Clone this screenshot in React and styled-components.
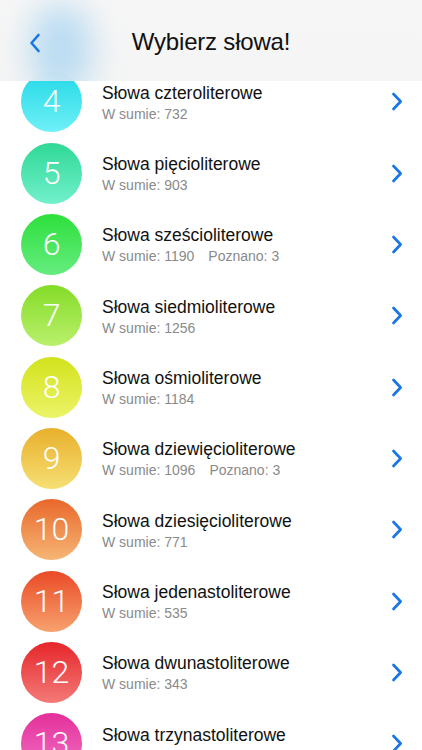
import React from "react";
import styled, { createGlobalStyle } from "styled-components";

const Global = createGlobalStyle`
  html, body { margin: 0; padding: 0; background: #fff; }
  body { font-family: "Liberation Sans", Arial, sans-serif; -webkit-font-smoothing: antialiased; }
  * { box-sizing: border-box; }
`;

const Screen = styled.div`
  position: relative;
  width: 422px;
  height: 750px;
  overflow: hidden;
  background: #fff;
`;

const Header = styled.header`
  position: absolute;
  top: 0;
  left: 0;
  right: 0;
  height: 81px;
  z-index: 2;
  display: flex;
  align-items: center;
  justify-content: center;
  padding-top: 2px;
  background: linear-gradient(180deg, rgba(246,246,246,0.97) 0%, rgba(244,244,244,0.96) 100%);
  overflow: hidden;
`;

const Blob = styled.div`
  position: absolute;
  left: 30px;
  top: 4px;
  width: 62px;
  height: 90px;
  border-radius: 45%;
  background: rgba(130, 195, 240, 0.5);
  filter: blur(16px);
`;

const BackButton = styled.button`
  position: absolute;
  left: 24px;
  top: 31px;
  width: 22px;
  height: 24px;
  padding: 0;
  border: 0;
  background: none;
  display: flex;
  align-items: center;
  justify-content: center;
`;

const Title = styled.h1`
  position: relative;
  margin: 0;
  font-family: "Liberation Sans", Arial, sans-serif;
  font-weight: 400;
  font-size: 24px;
  color: #111;
  letter-spacing: -0.2px;
`;

const List = styled.ul`
  list-style: none;
  margin: 0;
  padding: 66px 0 0 0;
`;

const Row = styled.li`
  height: 71.35px;
  display: flex;
  align-items: center;
  padding: 0 18px 0 21px;
`;

const Circle = styled.div`
  flex: none;
  width: 61px;
  height: 61px;
  border-radius: 50%;
  background: linear-gradient(180deg, ${p => p.$top} 0%, ${p => p.$bottom} 100%);
  display: flex;
  align-items: center;
  justify-content: center;
  color: #fff;
  font-family: "Roboto", "Liberation Sans", sans-serif;
  font-weight: 300;
  font-size: 32px;
  line-height: 1;
  padding-bottom: 1px;
`;

const Texts = styled.div`
  flex: 1;
  margin-left: 20px;
  display: flex;
  flex-direction: column;
  margin-top: 2px;
`;

const RowTitle = styled.div`
  font-size: 17.5px;
  color: #111;
  line-height: 21px;
`;

const Sub = styled.div`
  font-size: 14px;
  color: #8a8a8a;
  line-height: 18px;
  margin-top: 1px;
  display: flex;
  gap: 14px;
`;

const Chevron = styled.div`
  flex: none;
  width: 14px;
  display: flex;
  justify-content: center;
`;

const rows = [
  { n: 4, name: "Słowa czteroliterowe", total: 732, top: "#22d8e6", bottom: "#6ff0f6" },
  { n: 5, name: "Słowa pięcioliterowe", total: 903, top: "#2fd896", bottom: "#72f0cc" },
  { n: 6, name: "Słowa sześcioliterowe", total: 1190, known: 3, top: "#2ee03c", bottom: "#66ec80" },
  { n: 7, name: "Słowa siedmioliterowe", total: 1256, top: "#84dc28", bottom: "#baf06c" },
  { n: 8, name: "Słowa ośmioliterowe", total: 1184, top: "#d2e21c", bottom: "#ecf468" },
  { n: 9, name: "Słowa dziewięcioliterowe", total: 1096, known: 3, top: "#e8b02c", bottom: "#f6df74" },
  { n: 10, name: "Słowa dziesięcioliterowe", total: 771, top: "#e8682a", bottom: "#f6b676" },
  { n: 11, name: "Słowa jedenastoliterowe", total: 535, top: "#ea4a26", bottom: "#f7a26e" },
  { n: 12, name: "Słowa dwunastoliterowe", total: 343, top: "#e6262a", bottom: "#f47a78" },
  { n: 13, name: "Słowa trzynastoliterowe", total: 211, top: "#e4309a", bottom: "#f272c6" },
];

const RightIcon = () => (
  <svg width="12" height="19" viewBox="0 0 12 19" fill="none">
    <path d="M2.5 2 L9.6 9.5 L2.5 17" stroke="#1a76e6" strokeWidth="2.7" strokeLinecap="round" strokeLinejoin="round" />
  </svg>
);

const LeftIcon = () => (
  <svg width="12" height="20" viewBox="0 0 12 20" fill="none">
    <path d="M9.5 2 L2.5 10 L9.5 18" stroke="#1a76e6" strokeWidth="2.6" strokeLinecap="round" strokeLinejoin="round" />
  </svg>
);

export default function App() {
  return (
    <Screen>
      <Global />
      <Header>
        <Blob />
        <BackButton aria-label="Wstecz"><LeftIcon /></BackButton>
        <Title>Wybierz słowa!</Title>
      </Header>
      <List>
        {rows.map(r => (
          <Row key={r.n}>
            <Circle $top={r.top} $bottom={r.bottom}>{r.n}</Circle>
            <Texts>
              <RowTitle>{r.name}</RowTitle>
              <Sub>
                <span>W sumie: {r.total}</span>
                {r.known != null && <span>Poznano: {r.known}</span>}
              </Sub>
            </Texts>
            <Chevron><RightIcon /></Chevron>
          </Row>
        ))}
      </List>
    </Screen>
  );
}
